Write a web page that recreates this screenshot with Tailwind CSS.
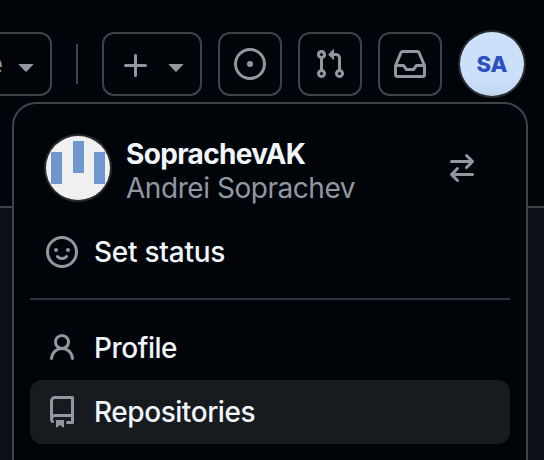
<!DOCTYPE html>
<html lang="en">
<head>
<meta charset="utf-8">
<title>User menu</title>
<script src="https://cdn.jsdelivr.net/npm/@tailwindcss/browser@4"></script>
</head>
<body class="relative h-[460px] w-[544px] overflow-hidden bg-[#0d1117] font-[Inter,'Liberation_Sans',sans-serif] text-[#f0f6fc]">
<header class="h-[208px] border-b-2 border-[#3d444d] bg-[#010409] pt-8 text-[#9198a1]">
  <div class="flex h-16 items-center">
    <button class="-ml-12 flex h-16 w-[100px] shrink-0 items-center justify-end rounded-xl border-2 border-[#3d444d] pr-2">
      <span class="mr-[7px] text-[28px] leading-8">e</span>
      <svg class="mt-1 size-8 shrink-0" viewBox="0 0 16 16" fill="currentColor"><path d="m4.427 7.427 3.396 3.396a.25.25 0 0 0 .354 0l3.396-3.396A.25.25 0 0 0 11.396 7H4.604a.25.25 0 0 0-.177.427Z"/></svg>
    </button>
    <div class="ml-6 h-10 w-0.5 bg-[#3d444d]"></div>
    <button class="ml-6 flex h-16 w-[100px] items-center gap-2 rounded-xl border-2 border-[#3d444d] pt-1 pl-4">
      <svg class="size-8 shrink-0" viewBox="0 0 16 16" fill="currentColor"><path d="M7.75 2a.75.75 0 0 1 .75.75V7h4.25a.75.75 0 0 1 0 1.5H8.5v4.25a.75.75 0 0 1-1.5 0V8.5H2.75a.75.75 0 0 1 0-1.5H7V2.75A.75.75 0 0 1 7.75 2Z"/></svg>
      <svg class="size-8 shrink-0" viewBox="0 0 16 16" fill="currentColor"><path d="m4.427 7.427 3.396 3.396a.25.25 0 0 0 .354 0l3.396-3.396A.25.25 0 0 0 11.396 7H4.604a.25.25 0 0 0-.177.427Z"/></svg>
    </button>
    <button class="ml-4 grid size-16 place-items-center rounded-xl border-2 border-[#3d444d]">
      <svg class="size-8" viewBox="0 0 16 16" fill="currentColor"><path d="M8 9.5a1.5 1.5 0 1 0 0-3 1.5 1.5 0 0 0 0 3Z"/><path d="M8 0a8 8 0 1 1 0 16A8 8 0 0 1 8 0ZM1.5 8a6.5 6.5 0 1 0 13 0 6.5 6.5 0 0 0-13 0Z"/></svg>
    </button>
    <button class="ml-4 grid size-16 place-items-center rounded-xl border-2 border-[#3d444d]">
      <svg class="size-8" viewBox="0 0 16 16" fill="currentColor"><path d="M1.5 3.25a2.25 2.25 0 1 1 3 2.122v5.256a2.251 2.251 0 1 1-1.5 0V5.372A2.25 2.25 0 0 1 1.5 3.25Zm5.677-.177L9.573.677A.25.25 0 0 1 10 .854V2.5h1A2.5 2.5 0 0 1 13.5 5v5.628a2.251 2.251 0 1 1-1.5 0V5a1 1 0 0 0-1-1h-1v1.646a.25.25 0 0 1-.427.177L7.177 3.427a.25.25 0 0 1 0-.354ZM3.75 2.5a.75.75 0 1 0 0 1.5.75.75 0 0 0 0-1.5Zm0 9.5a.75.75 0 1 0 0 1.5.75.75 0 0 0 0-1.5Zm8.25.75a.75.75 0 1 0 1.5 0 .75.75 0 0 0-1.5 0Z"/></svg>
    </button>
    <button class="ml-4 grid size-16 place-items-center rounded-xl border-2 border-[#3d444d]">
      <svg class="size-8" viewBox="0 0 16 16" fill="currentColor"><path d="M2.8 2.06A1.75 1.75 0 0 1 4.41 1h7.18c.7 0 1.333.417 1.61 1.06l2.74 6.395c.04.093.06.194.06.295v4.5A1.75 1.75 0 0 1 14.25 15H1.75A1.75 1.75 0 0 1 0 13.25v-4.5c0-.101.02-.202.06-.295Zm1.61.44a.25.25 0 0 0-.23.152L1.887 8H4.75a.75.75 0 0 1 .6.3L6.625 10h2.75l1.275-1.7a.75.75 0 0 1 .6-.3h2.863L11.82 2.652a.25.25 0 0 0-.23-.152Zm10.09 7h-2.875l-1.275 1.7a.75.75 0 0 1-.6.3h-3.5a.75.75 0 0 1-.6-.3L4.375 9.5H1.5v3.75c0 .138.112.25.25.25h12.5a.25.25 0 0 0 .25-.25Z"/></svg>
    </button>
    <div class="ml-[18px] grid size-16 place-items-center rounded-full bg-gradient-to-b from-[#cce1f9] from-70% to-[#c2d6f0] text-[22px] font-extrabold text-[#2b50bf] ring-2 ring-[#292b2f]">SA</div>
  </div>
</header>
<aside class="absolute top-[102px] left-3 h-[358px] w-[516px] rounded-t-3xl border-2 border-b-0 border-[#3d444d] bg-[#010409] px-4 pt-8 text-[28px] leading-8 tracking-[-0.35px]">
  <div class="flex h-16 items-center pr-8 pl-4">
    <svg class="size-16 rounded-full bg-[#f0f0f0] ring-2 ring-[#292b2f]" viewBox="0 0 64 64" fill="#7096d0"><path d="M5 16h11v32H5zM27 5h11v32H27zM48 16h11v32H48z"/></svg>
    <div class="ml-4 flex-1 pt-1.5">
      <div class="h-[34px] font-bold tracking-[-0.65px]">SoprachevAK</div>
      <div class="tracking-[-0.45px] text-[#9198a1]">Andrei Soprachev</div>
    </div>
    <svg class="size-8 text-[#9198a1]" viewBox="0 0 16 16" fill="currentColor"><path d="M5.22 14.78a.75.75 0 0 0 1.06-1.06L4.56 12h8.69a.75.75 0 0 0 0-1.5H4.56l1.72-1.72a.75.75 0 0 0-1.06-1.06l-3 3a.75.75 0 0 0 0 1.06l3 3Zm5.56-6.5a.75.75 0 1 1-1.06-1.06l1.72-1.72H2.75a.75.75 0 0 1 0-1.5h8.69L9.72 2.28a.75.75 0 0 1 1.06-1.06l3 3a.75.75 0 0 1 0 1.06l-3 3Z"/></svg>
  </div>
  <div class="mt-5 flex h-16 items-center gap-4 pl-4">
    <svg class="size-8 text-[#9198a1]" viewBox="0 0 16 16" fill="currentColor"><path d="M8 0a8 8 0 1 1 0 16A8 8 0 0 1 8 0ZM1.5 8a6.5 6.5 0 1 0 13 0 6.5 6.5 0 0 0-13 0Zm3.82 1.636a.75.75 0 0 1 1.038.175l.007.009c.103.118.22.222.35.31.264.178.683.37 1.285.37.602 0 1.02-.192 1.285-.371.13-.088.247-.192.35-.31l.007-.008a.75.75 0 0 1 1.222.87l-.022-.015c.02.013.021.015.021.015v.001l-.001.002-.002.003-.005.007-.014.019a2.066 2.066 0 0 1-.184.213c-.16.166-.338.316-.53.445-.63.418-1.37.638-2.127.629-.946 0-1.652-.308-2.126-.63a3.331 3.331 0 0 1-.715-.657l-.014-.02-.005-.006-.002-.003v-.002h-.001l.613-.432-.614.43a.75.75 0 0 1 .183-1.044ZM12 7a1 1 0 1 1-2 0 1 1 0 0 1 2 0ZM5 8a1 1 0 1 1 0-2 1 1 0 0 1 0 2Zm5.25 2.25.592.416a97.71 97.71 0 0 0-.592-.416Z"/></svg>
    <span class="font-[450] tracking-[-0.25px]">Set status</span>
  </div>
  <div class="mt-3.5 h-0.5 bg-[#2f353b]"></div>
  <div class="mt-4 flex h-16 items-center gap-4 pl-4">
    <svg class="size-8 text-[#9198a1]" viewBox="0 0 16 16" fill="currentColor"><path d="M10.561 8.073a6.005 6.005 0 0 1 3.432 5.142.75.75 0 1 1-1.498.07 4.5 4.5 0 0 0-8.99 0 .75.75 0 0 1-1.498-.07 6.004 6.004 0 0 1 3.431-5.142 3.999 3.999 0 1 1 5.123 0ZM10.5 5a2.5 2.5 0 1 0-5 0 2.5 2.5 0 0 0 5 0Z"/></svg>
    <span class="font-[450] tracking-[-0.5px]">Profile</span>
  </div>
  <div class="flex h-16 items-center gap-4 rounded-xl bg-[#171b1f] pl-4">
    <svg class="size-8 text-[#9198a1]" viewBox="0 0 16 16" fill="currentColor"><path d="M2 2.5A2.5 2.5 0 0 1 4.5 0h8.75a.75.75 0 0 1 .75.75v12.5a.75.75 0 0 1-.75.75h-2.5a.75.75 0 0 1 0-1.5h1.75v-2h-8a1 1 0 0 0-.714 1.7.75.75 0 1 1-1.072 1.05A2.495 2.495 0 0 1 2 11.5Zm10.5-1h-8a1 1 0 0 0-1 1v6.708A2.486 2.486 0 0 1 4.5 9h8ZM5 12.25a.25.25 0 0 1 .25-.25h3.5a.25.25 0 0 1 .25.25v3.25a.25.25 0 0 1-.4.2l-1.45-1.087a.249.249 0 0 0-.3 0L5.4 15.7a.25.25 0 0 1-.4-.2Z"/></svg>
    <span class="font-[450] tracking-[-0.45px]">Repositories</span>
  </div>
</aside>
</body>
</html>
